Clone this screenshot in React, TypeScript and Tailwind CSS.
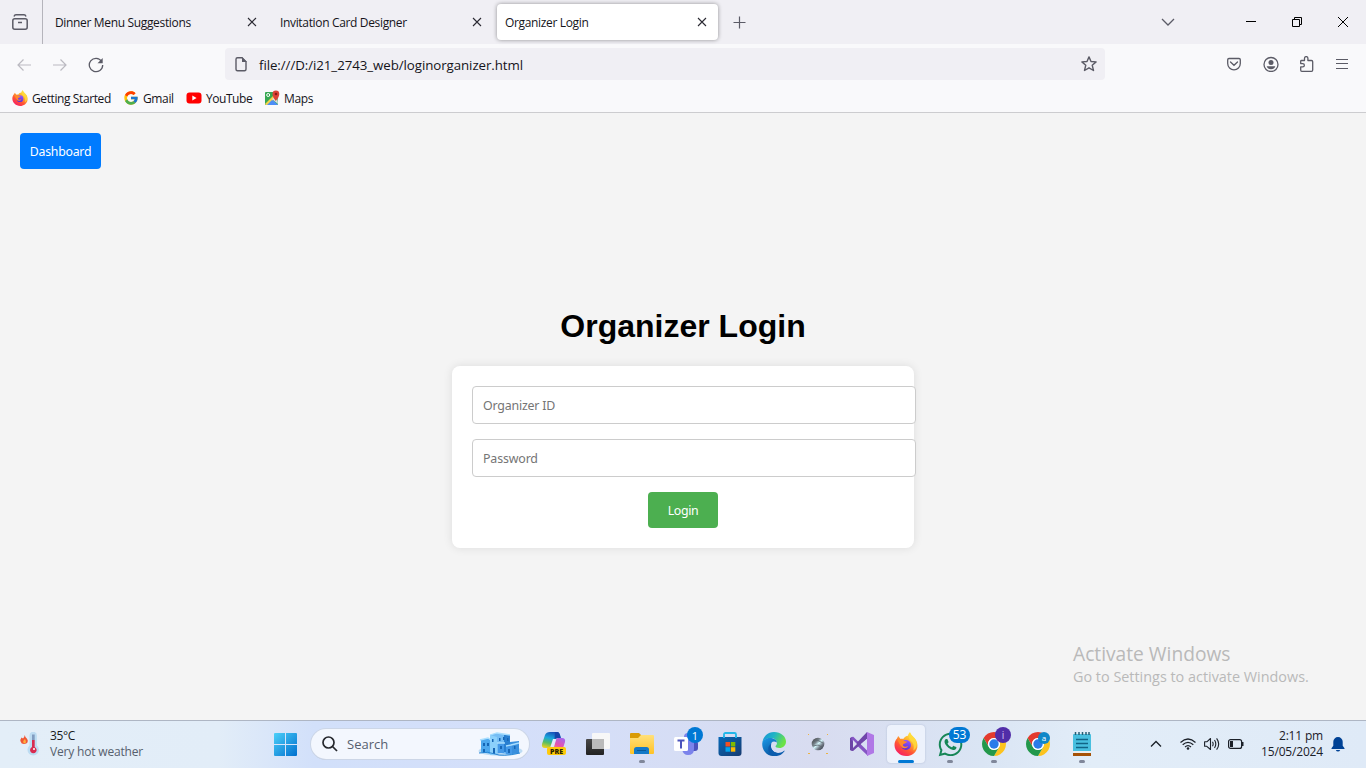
import type { ReactNode } from 'react';
import { FcGoogle } from 'react-icons/fc';
import { FaWhatsapp } from 'react-icons/fa';

const segoe = "font-['Open_Sans','Noto_Sans',sans-serif]";
const tahoma = "font-['Noto_Sans',sans-serif]";

function Firefox({ size, id }: { size: number; id: string }) {
  return (
    <svg width={size} height={size} viewBox="0 0 24 24" className="shrink-0">
      <defs>
        <linearGradient id={id + 'a'} x1="0.85" y1="0" x2="0.2" y2="1">
          <stop offset="0" stopColor="#fff44f" />
          <stop offset="0.35" stopColor="#ffb62e" />
          <stop offset="0.65" stopColor="#ff5634" />
          <stop offset="1" stopColor="#f5156c" />
        </linearGradient>
        <linearGradient id={id + 'b'} x1="0.6" y1="0" x2="0.3" y2="1">
          <stop offset="0" stopColor="#9059ff" />
          <stop offset="1" stopColor="#5b2bd0" />
        </linearGradient>
      </defs>
      <path d="M3 6.5 4.2 4 6.6 7c.8-.3 1.800-.3 2.600 0C10.500 5 12 4 14 3.800 14.200 2.200 15 .8 16 .2 17 3.500 20.500 5 22 8c1 2 1.800 4.600 1.300 7.400C22.300 20.500 17.700 24 12.200 24 5.800 24 .7 19 .5 13.200.4 10.500 1.500 8 3 6.500Z" fill={`url(#${id}a)`} />
      <path d="M16 .4c1 3 4 4.600 5.500 7.300 1.300 2.600 1.500 5 .6 7.500-.5 1.500-1.600 2.500-2.800 3.200 1.200-4.200.2-7.400-2.800-9.900C14.300 6.500 14 3 16 .4Z" fill="#ffdc3c" opacity=".8" />
      <circle cx="12" cy="13" r="5" fill={`url(#${id}b)`} />
      <path d="M3.500 7.500c2 0 4 .2 5.700 1.200 1.200.6 2 .6 3.800.8-.3 1.400-2 1.800-3.500 2.500-1 .8-.8 2 .8 2.500 1.500.5 2.600-.3 4-.2-1.400 2-4 2.700-6.300 1.200L5.500 12Z" fill="#ff8a2a" />
    </svg>
  );
}

function Chrome() {
  return (
    <svg width="24" height="24" viewBox="0 0 24 24">
      <path d="M1.610 6A12 12 0 0 1 22.390 6H12A6 6 0 0 0 6.800 15Z" fill="#e33b2e" />
      <path d="M22.390 6A12 12 0 0 1 12 24L17.200 15A6 6 0 0 0 12 6Z" fill="#fcc31e" />
      <path d="M12 24A12 12 0 0 1 1.610 6L6.800 15A6 6 0 0 0 17.200 15Z" fill="#23984b" />
      <circle cx="12" cy="12" r="6" fill="#fff" />
      <circle cx="12" cy="12" r="4.700" fill="#2a7be9" />
    </svg>
  );
}

function Tab({ title, active }: { title: string; active?: boolean }) {
  return (
    <div className={`flex h-9 w-[221px] shrink-0 items-center justify-between rounded pl-2 pr-2.5 ${active ? 'bg-white shadow-[0_0_4px_rgba(0,0,0,0.4)]' : ''}`}>
      <span className="whitespace-nowrap pt-0.5 text-[12px] leading-4 tracking-[-0.34px] text-[#15141a]">{title}</span>
      <svg width="12" height="12" viewBox="0 0 12 12" fill="none" stroke="#2b2a33" strokeWidth="1.100"><path d="m2 2 8 8M10 2l-8 8" /></svg>
    </div>
  );
}

function Tool({ children }: { children: ReactNode }) {
  return <span className="flex h-9 w-9 items-center justify-center text-[#5b5b66]">{children}</span>;
}

function TaskItem({ children, dot, active }: { children: ReactNode; dot?: boolean; active?: boolean }) {
  return (
    <div className="flex w-11 shrink-0 justify-center">
      <div className={`relative flex h-[38px] w-[38px] items-center justify-center rounded ${active ? 'bg-[#edf2fc] shadow-[0_0_2px_rgba(60,80,130,0.25)]' : ''}`}>
        {children}
        {dot && <span className="absolute bottom-0 left-4 h-[3px] w-1.5 rounded-full bg-[#80879a]" />}
        {active && <span className="absolute bottom-0 left-[11px] h-[3px] w-4 rounded-full bg-[#0078d4]" />}
      </div>
    </div>
  );
}

function Copilot() {
  return (
    <svg width="26" height="26" viewBox="0 0 26 26">
      <defs>
        <linearGradient id="cpa" x1="0.6" y1="0" x2="0.300" y2="1"><stop offset="0" stopColor="#174fb8" /><stop offset="0.4" stopColor="#19a7dc" /><stop offset="0.7" stopColor="#55bd65" /><stop offset="1" stopColor="#e6cf23" /></linearGradient>
        <linearGradient id="cpb" x1="0.800" y1="0" x2="0.300" y2="1"><stop offset="0" stopColor="#a567ee" /><stop offset="0.5" stopColor="#e654ad" /><stop offset="1" stopColor="#ff9470" /></linearGradient>
      </defs>
      <path d="M9 1h7c2 0 2.500 1.500 3 3l.8 3H17c-2 0-3 1.500-3.500 3L11 17H4c-2.500 0-3.500-1.500-3-4L4 4c.8-2 2.500-3 5-3Z" fill="url(#cpa)" />
      <path d="M14 1h2c2 0 2.500 1.500 3 3l.8 3H17l-3.500 1Z" fill="#1545aa" />
      <path d="M17 7h4c2.500 0 3.600 1.600 3 4l-2 6c-.8 2.500-2 4-4.500 4H9c2.500 0 3-1.500 3.500-3L15 9c.4-1.200 1-2 2-2Z" fill="url(#cpb)" />
      <path d="M12 8h3l-3 9H9Z" fill="#e4ebfa" />
      <rect x="6" y="16" width="19" height="8" rx="2" fill="#ffca0a" />
      <text x="9" y="22.700" fontFamily="Open Sans, sans-serif" fontSize="7" fontWeight="800" fill="#2b2300" textLength="13" lengthAdjust="spacingAndGlyphs">PRE</text>
    </svg>
  );
}

function Village() {
  return (
    <svg width="45" height="25" viewBox="0 0 45 25">
      <ellipse cx="22.500" cy="19" rx="22" ry="5" fill="#bddcf4" />
      <path d="M3 8 10 6l3 2v14l-10-2Z" fill="#4da8ee" />
      <path d="M12 3 19 1l13 2v8l8 1v9l-8 2-9-2-11 2Z" fill="#75bdf4" />
      <path d="m12 3 7 2v17l-7 1Z" fill="#8bd0fb" />
      <path d="m26 3 6 0v18l-6-1Z" fill="#287fd1" />
      <path d="m32 10 9-1v12l-7 1-2-2Z" fill="#398fdd" />
      <path d="M20 11h6v10h-6ZM28 14l6-2v10h-6Z" fill="#4499e8" />
      <path d="m2 8 8-2 3 2M12 3l7-2 13 2M19 11h8M28 14l5-1 8-2" fill="none" stroke="#a9defe" strokeWidth="1.300" />
      <path d="M5 11h2v3H5ZM9 11h2v3H9ZM14 7h1.500v3H14ZM21 6h1.500v3H21ZM25 5h1.500v3H25ZM29 6h1.500v3H29ZM15 16h2v6h-2ZM22 14h2v3h-2ZM30 17h2v4h-2ZM36 14h1.500v3H36ZM5 17h2v4H5Z" fill="#1666b5" />
      <path d="M1 21q9-2 16 1t25-1" stroke="#2886d5" fill="none" />
    </svg>
  );
}

function Bookmark({ label, width, children }: { label: string; width: string; children: ReactNode }) {
  return <div className="flex items-center gap-1">{children}<span className={`whitespace-nowrap pt-0.5 text-[12px] leading-4 text-[#15141a] ${width}`}>{label}</span></div>;
}

function Browser() {
  return (
    <header className="h-[113px] border-b border-[#cccccf] bg-[#f9f9fb]">
      <div className="flex h-11 items-center bg-[#f0eff4]">
        <div className="flex h-11 w-[43px] items-center justify-center border-r border-[#b5b4bb] pr-0.5">
          <svg width="16" height="16" viewBox="0 0 16 16" fill="none" stroke="#5b5b66" strokeWidth="1.500"><rect x=".8" y="4.700" width="14.400" height="10.500" rx="2" /><path d="M2 2.600Q2.600.8 4 .8h8q1.400 0 2 1.800M6 8.500h4" /></svg>
        </div>
        <div className="ml-1 flex gap-1">
          <Tab title="Dinner Menu Suggestions" />
          <Tab title="Invitation Card Designer" />
          <Tab title="Organizer Login" active />
        </div>
        <svg className="ml-[15px] mt-px" width="13" height="13" viewBox="0 0 13 13" stroke="#5b5b66" strokeWidth="1.200"><path d="M6.500 .5v12M.5 6.500h12" /></svg>
        <div className="ml-auto flex items-center">
          <svg className="mr-[71px]" width="14" height="8" viewBox="0 0 14 8" fill="none" stroke="#5b5b66" strokeWidth="1.300"><path d="m1 1 6 6 6-6" /></svg>
          <svg className="mr-9" width="10" height="10" viewBox="0 0 10 10"><path d="M0 4.500h10" stroke="#000" /></svg>
          <svg className="mr-9" width="10" height="10" viewBox="0 0 10 10" fill="none" stroke="#000"><path d="M2.500 2.500v-2h7v7h-2M.5 2.500h7v7h-7Z" /></svg>
          <svg className="mr-[18px]" width="10" height="10" viewBox="0 0 10 10" stroke="#000"><path d="m0 0 10 10M10 0 0 10" /></svg>
        </div>
      </div>
      <div className="flex h-10 items-center">
        <div className="ml-1.5 flex pt-0.5">
          <Tool><svg width="14" height="12" viewBox="0 0 14 12" fill="none" stroke="#bbbac1" strokeWidth="1.200"><path d="M14 6H1M6.500.5 1 6l5.500 5.500" /></svg></Tool>
          <Tool><svg width="14" height="12" viewBox="0 0 14 12" fill="none" stroke="#bbbac1" strokeWidth="1.200"><path d="M0 6h13M7.500.5 13 6l-5.500 5.500" /></svg></Tool>
          <Tool><svg width="16" height="16" viewBox="0 0 16 16" fill="none" stroke="currentColor" strokeWidth="1.300"><path d="M13.600 4.300A6.700 6.700 0 1 0 14.700 8" /><path d="M14.700 1v5.200H9.500Z" fill="currentColor" stroke="none" /></svg></Tool>
        </div>
        <div className="ml-[111px] flex h-8 w-[880px] items-center rounded bg-[#f0eff4] pl-[9px] pr-2">
          <svg width="14" height="16" viewBox="0 0 14 16" fill="none" stroke="#5b5b66" strokeWidth="1.400"><path d="M8 1.700H3.500q-1.500 0-1.500 1.500v10q0 1.500 1.500 1.500h7q1.500 0 1.500-1.500V5.700Z" /><path d="M8 1v5h5Z" fill="#5b5b66" stroke="none" /></svg>
          <span className="ml-[11px] pt-[3px] text-[13.300px] tracking-[-0.07px] text-[#15141a]">file:///D:/i21_2743_web/loginorganizer.html</span>
          <svg className="ml-auto" width="16" height="16" viewBox="0 0 16 16" fill="none" stroke="#5b5b66" strokeWidth="1.400" strokeLinejoin="round"><path d="m8 .9 2 4.600 5.100.4-3.900 3.300 1.300 5.300L8 11.800l-4.500 2.700 1.300-5.300L.9 5.900 6 5.500Z" /></svg>
        </div>
        <div className="ml-auto mr-1.5 flex">
          <Tool><svg width="14" height="14" viewBox="0 0 14 14" fill="none" stroke="currentColor" strokeWidth="1.300"><path d="M2 1.500h10q1.300 0 1.300 1.300V6.500a6.300 6.300 0 0 1-12.600 0V2.800Q.7 1.500 2 1.500ZM3.500 5 7 8.300 10.500 5" strokeLinecap="round" /></svg></Tool>
          <Tool><svg width="16" height="16" viewBox="0 0 16 16" className="ml-px"><circle cx="8" cy="8.500" r="7" fill="none" stroke="currentColor" strokeWidth="1.300" /><circle cx="8" cy="6.500" r="2.500" fill="currentColor" /><path d="M3.700 10.200h8.600q-.8 3-4.300 3t-4.300-3Z" fill="currentColor" /></svg></Tool>
          <Tool><svg width="16" height="16" viewBox="0 0 16 16" className="ml-px" fill="none" stroke="currentColor" strokeWidth="1.300" strokeLinejoin="round"><path d="M5.500 4.500V2.300a1.700 1.700 0 0 1 3.400 0v2.200h3.600q1.200 0 1.200 1.200v8.200q0 1.400-1.200 1.400H2.800q-1.100 0-1.100-1.200v-3.200h2a1.600 1.600 0 0 0 0-3.300h-2V5.300q0-.8.9-.8Z" /></svg></Tool>
          <Tool><svg width="12" height="12" viewBox="0 0 12 12" stroke="currentColor" strokeWidth="1.100"><path d="M0 1.500h12M0 5.500h12M0 10.500h12" /></svg></Tool>
        </div>
      </div>
      <nav className="flex items-center pl-3 pt-[5px]">
        <Bookmark label="Getting Started" width="w-[80px] tracking-[-0.4px]"><Firefox size={16} id="ffs" /></Bookmark>
        <div className="ml-[11px]"><Bookmark label="Gmail" width="w-[31px] tracking-[-0.36px]"><FcGoogle size={16} /></Bookmark></div>
        <div className="ml-3"><Bookmark label="YouTube" width="w-[47px] tracking-[-0.45px]"><svg width="16" height="16" viewBox="0 0 16 16"><rect x=".5" y="2.500" width="15" height="11" rx="3" fill="#f00" /><path d="m6.300 5.600 4.300 2.400-4.300 2.400Z" fill="#fff" /></svg></Bookmark></div>
        <div className="ml-[11px]"><Bookmark label="Maps" width="tracking-[-0.36px]"><svg width="16" height="16" viewBox="0 0 16 16"><rect x="1" y="2" width="13" height="13" rx="1" fill="#36a852" /><path d="m2 15 6-6 6 6Z" fill="#518ef8" /><path d="m1 14 9-9 2 2-8 8H2Z" fill="#f6d34b" /><path d="m3 15 5-5 5 5Z" fill="#4c8df6" /><path d="m8 9 5-3 1 8Z" fill="#dce1e5" /><circle cx="4.200" cy="5" r="1.500" fill="none" stroke="#fff" /><path d="M11.800 11Q8.500 7 8.500 4a3.400 3.400 0 0 1 6.800 0q0 3-3.500 7Z" fill="#dc4337" /><circle cx="12" cy="4" r="1.300" fill="#8c1a14" /></svg></Bookmark></div>
      </nav>
    </header>
  );
}

function Page() {
  return (
    <main className="flex h-[607px] flex-col bg-[#f4f4f4]">
      <button className={`ml-5 mt-5 h-9 w-[81px] whitespace-nowrap rounded bg-[#007bff] pt-0.5 text-[12.300px] tracking-[-0.25px] text-white ${tahoma}`}>Dashboard</button>
      <h1 className="mt-[138px] text-center font-['Liberation_Sans',Arial,sans-serif] text-[32px] font-bold leading-[38px] text-black">Organizer Login</h1>
      <form className={`mx-auto mt-[21px] flex h-[182px] w-[462px] flex-col rounded-lg bg-white p-5 text-[12.400px] shadow-[0_0_10px_rgba(0,0,0,0.1)] ${tahoma}`}>
        <input className="h-[38px] w-[444px] shrink-0 rounded border border-[#ccc] bg-white px-2.5 tracking-[-0.2px] placeholder:text-[#757575]" placeholder="Organizer ID" />
        <input className="mt-[15px] h-[38px] w-[444px] shrink-0 rounded border border-[#ccc] bg-white px-2.5 tracking-[-0.15px] placeholder:text-[#757575]" placeholder="Password" type="password" />
        <button type="button" className="mx-auto mt-[15px] h-9 w-[70px] shrink-0 rounded bg-[#4caf50] pt-0.5 tracking-[-0.4px] text-white">Login</button>
      </form>
      <aside className="ml-[1073px] mt-[93px] whitespace-nowrap text-[#b9b9b9]">
        <p className="text-[19.200px] leading-[26px]">Activate Windows</p>
        <p className="text-[14.400px] leading-5">Go to Settings to activate Windows.</p>
      </aside>
    </main>
  );
}

function Taskbar() {
  return (
    <footer className="flex h-12 items-center border-t border-[#aeb6c4] bg-[linear-gradient(90deg,#e3eef8_0%,#e2edf8_16%,#d2e0fa_23%,#d4dffa_38%,#d8dcf0_60%,#dae5f4_72%,#e2edf8_80%,#dfeaf7_100%)] pb-px">
      <div className="flex w-[274px] shrink-0 items-center pl-5">
        <svg width="20" height="24" viewBox="0 0 20 24">
          <path d="M4.800 3q.2 2 2 3.500 1.500 1.600.8 3.700Q6.800 12 4 12T.6 9.500Q0 7.500 1.500 5.500L3 6.500Q4.500 5.200 4.800 3Z" fill="#f05735" />
          <path d="M5 7Q7 11 4.500 11.300 2.500 11 3.300 9Z" fill="#ffb13d" />
          <path d="M9.500 3.500a3.700 3.700 0 0 1 7.400 0v10a5.700 5.700 0 1 1-7.400 0Z" fill="#bddcf2" />
          <path d="M12 8h2.700v7a3.300 3.300 0 1 1-2.700 0Z" fill="#d92c50" /><path d="M12 2.500h2.700V8H12Z" fill="#829cc0" /><circle cx="14" cy="17" r="1" fill="#fff" />
        </svg>
        <div className="ml-2.5 whitespace-nowrap text-[12px] leading-4">
          <p className="tracking-[-0.4px] text-[#181b20]">35°C</p>
          <p className="tracking-[-0.18px] text-[#56606d]">Very hot weather</p>
        </div>
      </div>
      <svg width="23" height="23" viewBox="0 0 23 23" className="mt-px shrink-0"><defs><linearGradient id="win" x1="0" y1="0" x2="23" y2="23" gradientUnits="userSpaceOnUse"><stop offset="0" stopColor="#4cd0f9" /><stop offset="1" stopColor="#006fce" /></linearGradient></defs><path d="M1 0h10v11H0V1Q0 0 1 0ZM12 0h10q1 0 1 1v10H12ZM0 12h11v11H1Q0 23 0 22ZM12 12h11v10q0 1-1 1H12Z" fill="url(#win)" /></svg>
      <div className="ml-3.5 flex h-[30px] w-[218px] shrink-0 items-center rounded-full bg-[#f3f7fe] pl-[11px] pr-1.5 shadow-[0_0_0_1px_#ccd6e7,0_1px_0_0_#b5bfd0]">
        <svg width="16" height="16" viewBox="0 0 16 16" fill="none" stroke="#25282d" strokeWidth="1.700"><circle cx="6.500" cy="6.500" r="5.500" /><path d="m10.500 10.500 4.500 4.500" /></svg>
        <span className="ml-[9px] pt-px text-[13px] text-[#56606f]">Search</span>
        <span className="ml-auto"><Village /></span>
      </div>
      <div className="ml-[3px] flex">
        <TaskItem><Copilot /></TaskItem>
        <TaskItem><svg width="24" height="24" viewBox="0 0 24 24"><defs><linearGradient id="tv" x2="0" y2="1"><stop stopColor="#484848" /><stop offset="1" stopColor="#222" /></linearGradient></defs><rect x="0" y="7" width="18" height="16" rx="1" fill="url(#tv)" /><rect x="6" y="1" width="18" height="16" rx="1" fill="#f7f7f7" /><path d="M6 7h12v10H7q-1 0-1-1Z" fill="#bababa" /></svg></TaskItem>
        <TaskItem dot><svg width="24" height="24" viewBox="0 0 24 24"><defs><linearGradient id="fo" x2="0" y2="1"><stop stopColor="#ffe07b" /><stop offset="1" stopColor="#ffc226" /></linearGradient></defs><path d="M1 1h8l2.500 2.500L8 7H0V2Q0 1 1 1Z" fill="#d99b05" /><path d="M0 6h8l3-3h12q1 0 1 1v17q0 1-1 1H1q-1 0-1-1Z" fill="url(#fo)" /><path d="M4 22v-4.500Q4 15 6.500 15h10q2.500 0 2.500 2.500V22Z" fill="#1379c8" /><path d="M7 18.500h9" stroke="#095a99" /></svg></TaskItem>
        <TaskItem>
          <svg width="24" height="24" viewBox="0 0 24 24"><circle cx="20" cy="7" r="3" fill="#545bc4" /><rect x="15" y="9" width="9" height="10" rx="3" fill="#4b52bd" /><path d="M8 8h12v9q0 6-6 6-5 0-6-6Z" fill="#7b83eb" /><circle cx="14" cy="5" r="4" fill="#7b83eb" /><rect x="0" y="5" width="14" height="14" rx="1.500" fill="#fff" /><path d="M3.500 8.500h7M7 8.500v8" stroke="#4b53bc" strokeWidth="2" /></svg>
          <span className="absolute right-[2px] top-[2px] flex h-4 w-4 items-center justify-center rounded-full bg-[#0078d4] text-[11px] leading-none text-white">1</span>
        </TaskItem>
        <TaskItem><svg width="24" height="24" viewBox="0 0 24 24"><defs><linearGradient id="st" x2="1" y2="1"><stop stopColor="#0669b9" /><stop offset="1" stopColor="#173b70" /></linearGradient></defs><path d="M6 7V2.500Q6 1 7.500 1h9Q18 1 18 2.500V7" fill="none" stroke="#22b7e9" strokeWidth="1.800" /><path d="M.5 5h23v16q0 3-3 3h-17q-3 0-3-3Z" fill="url(#st)" /><path d="M7.500 10H12v4.500H7.500Z" fill="#f25022" /><path d="M12.800 10h4.500v4.500h-4.500Z" fill="#7fba00" /><path d="M7.500 15.200H12v4.500H7.500Z" fill="#00a4ef" /><path d="M12.800 15.200h4.500v4.500h-4.500Z" fill="#ffb900" /><path d="M6 6V4M18 6V4" stroke="#22b7e9" strokeWidth="1.800" /></svg></TaskItem>
        <TaskItem><svg width="24" height="24" viewBox="0 0 24 24"><defs><linearGradient id="ea" x2="1" y2=".4"><stop stopColor="#168fd9" /><stop offset=".5" stopColor="#20b5c5" /><stop offset="1" stopColor="#6be246" /></linearGradient><linearGradient id="eb" x2=".6" y2="1"><stop stopColor="#1b9ae8" /><stop offset="1" stopColor="#08539e" /></linearGradient></defs><path d="M.3 11C1 4.500 5.800 0 12 0c7 0 12 4.600 12 9.500 0 4-3 6.500-6.500 6.500-2.500 0-4-.8-4-1.700 0-.8 1.500-1.200 1.500-3.300C15 8 12 6 8.500 6 4.500 6 1 8.500.3 11Z" fill="url(#ea)" /><path d="M.3 11C1 8 4 6 8 6c3.500 0 6.500 1.700 7 4.500-5-3-7 1.500-6 5 1 4 5.500 6.300 9.500 5.500C13.500 25.500 6.500 24.500 3 20 .8 17.200 0 14 .3 11Z" fill="url(#eb)" /><path d="M9.400 11.500C7.500 17 12 22.500 19 20.500q1.800-.6 3.300-1.900.4.200 0 .8C19.500 23.300 15.500 24.500 11.500 24 5.500 21.500 4.500 14.500 9.400 11.500Z" fill="#0b5cad" /></svg></TaskItem>
        <TaskItem><svg width="24" height="24" viewBox="0 0 24 24"><defs><linearGradient id="orb" x2="1" y2="1"><stop stopColor="#333" /><stop offset=".35" stopColor="#78838b" /><stop offset=".5" stopColor="#d3f4fa" /><stop offset=".7" stopColor="#717884" /><stop offset="1" stopColor="#19232e" /></linearGradient></defs><path d="M2 2h1v1H2ZM21 2h1v1h-1ZM2 21h2v1H2ZM20 21h2v1h-2Z" fill="#edb342" /><circle cx="12" cy="12" r="6.300" fill="url(#orb)" /><path d="m7 10 4-2 6 3M7 14l5-1 4 2" stroke="#59636b" fill="none" strokeWidth=".8" /></svg></TaskItem>
        <TaskItem><svg width="24" height="24" viewBox="0 0 24 24"><path d="m0 6 2-1 8 7-7.500 7L0 18Z" fill="#6b45a5" /><path d="m1.500 5 1.800-.2L18 19.500V24L1.300 8Z" fill="#8555c4" /><path d="M0 18 17 0l1 6L3 19Z" fill="#7047aa" /><path d="m17 0 7 3v18l-7 3Z" fill="#b078e6" /><path d="m3 8 4 4-4 4Z" fill="#dce0f2" /><path d="m17 7-6 5 6 5Z" fill="#d9e0f4" /></svg></TaskItem>
        <TaskItem active><Firefox size={24} id="ffl" /></TaskItem>
        <TaskItem dot><FaWhatsapp size={27} color="#168657" /><span className="absolute right-[-1px] top-[2px] flex h-4 w-[21px] items-center justify-center rounded-full bg-[#0078d4] text-[12px] leading-none text-white">53</span></TaskItem>
        <TaskItem dot><Chrome /><span className="absolute right-[2px] top-[2px] flex h-4 w-4 items-center justify-center rounded-full bg-[#512da8] text-[10px] leading-none text-[#d5c8ef]">i</span></TaskItem>
        <TaskItem><Chrome /><span className="absolute right-[7px] top-[7px] flex h-3 w-3 items-center justify-center rounded-full bg-[#0f87c8] text-[8px] leading-none text-white">a</span></TaskItem>
        <TaskItem dot><svg width="20" height="24" viewBox="0 0 20 24"><rect x="1" y="2" width="18" height="20" rx="1" fill="#48bfdf" /><path d="M1 19h18v2H1Z" fill="#e9eef0" /><path d="M1 21h18v3H1Z" fill="#a55207" /><path d="M3.500 0v3M7 0v3M10.500 0v3M14 0v3M17 0v3" stroke="#245f76" strokeWidth="1.500" /><path d="M4 7.500h12M4 11.500h12M4 15.500h12" stroke="#116486" strokeWidth="1.500" /></svg></TaskItem>
      </div>
      <div className="ml-auto flex items-center pr-[21px] text-[#1b2028]">
        <svg className="mr-[18px]" width="12" height="8" viewBox="0 0 12 8" fill="none" stroke="currentColor" strokeWidth="1.300"><path d="m1 6.500 5-5 5 5" /></svg>
        <svg className="mr-2" width="16" height="12" viewBox="0 0 16 12" fill="none" stroke="currentColor" strokeWidth="1.200"><path d="M.5 4.500q7.500-7 15 0M2.700 6.800q5.300-5 10.600 0M5 9q3-2.700 6 0" /><circle cx="8" cy="10.500" r="1.300" fill="currentColor" stroke="none" /></svg>
        <svg className="mr-2" width="16" height="14" viewBox="0 0 16 14" fill="none" stroke="currentColor" strokeWidth="1.100" strokeLinejoin="round"><path d="M.6 4.800h2.200L6.500 1.500v11L2.800 9.300H.6ZM8.500 4.800q1.300 2.200 0 4.400M10.500 3q2.600 4 0 8M12.600 1.300q4.200 5.700 0 11.400" /></svg>
        <svg width="16" height="10" viewBox="0 0 16 10" fill="none" stroke="currentColor"><rect x=".6" y=".6" width="13" height="8.800" rx="2" strokeWidth="1.200" /><path d="M2 2h3v6H2ZM14 3h1.500v4H14Z" fill="currentColor" stroke="none" /></svg>
        <div className="ml-[17px] w-[62px] whitespace-nowrap text-right text-[12px] leading-4 tracking-[-0.18px]"><p>2:11 pm</p><p className="-ml-2">15/05/2024</p></div>
        <svg className="ml-2" width="14" height="16" viewBox="0 0 14 16" fill="#004295"><path d="M2.300 5.700a4.700 4.700 0 0 1 9.400 0v4l1.800 2.500v.8H.5v-.8l1.800-2.500ZM4.800 14h4.400Q8.500 15.500 7 15.500T4.800 14Z" /></svg>
      </div>
    </footer>
  );
}

export default function App() {
  return <div className={`h-screen w-[1366px] overflow-hidden ${segoe}`}><Browser /><Page /><Taskbar /></div>;
}
